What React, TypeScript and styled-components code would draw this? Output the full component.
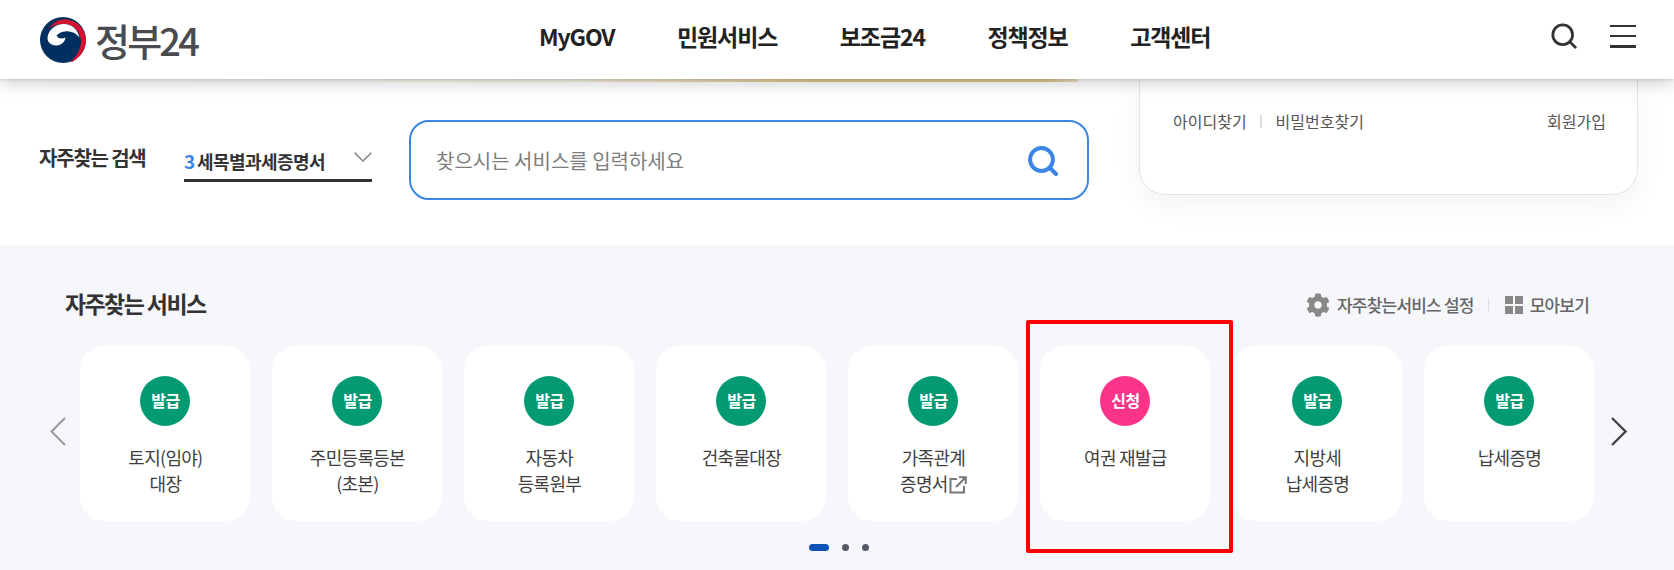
import React from "react";
import styled, { createGlobalStyle } from "styled-components";
import { FaCog } from "react-icons/fa";

const Global = createGlobalStyle`
  html, body { margin: 0; padding: 0; background: #fff; overflow: hidden; }
  body { font-family: "Noto Sans CJK KR", "Noto Sans", sans-serif; color: #333; }
  * { box-sizing: border-box; }
`;

const Page = styled.div`
  width: 1674px;
  height: 570px;
  overflow: hidden;
  display: flex;
  flex-direction: column;
`;

const Header = styled.header`
  position: relative;
  z-index: 5;
  height: 79px;
  flex: none;
  background: #fff;
  display: flex;
  align-items: center;
  padding: 0 38px 0 40px;
  box-shadow: 0 1px 2px rgba(0, 0, 0, 0.1), 0 4px 16px rgba(0, 0, 0, 0.2);
`;

const Logo = styled.a`
  display: flex;
  align-items: center;
  gap: 9px;
  width: 159px;
  flex: none;
`;

const LogoText = styled.span`
  font-size: 38px;
  line-height: 44px;
  font-weight: 500;
  letter-spacing: -2.8px;
  color: #4a4b50;
  white-space: nowrap;
`;

const Nav = styled.nav`
  display: flex;
  gap: 62.5px;
  margin-left: 340px;
  margin-top: -7px;
`;

const NavItem = styled.a`
  font-size: 23px;
  line-height: 30px;
  font-weight: 700;
  color: #222;
  letter-spacing: -1.1px;
  white-space: nowrap;
`;

const HeaderTools = styled.div`
  margin-left: auto;
  display: flex;
  align-items: center;
  gap: 33px;
  margin-top: -7px;
`;

const MenuButton = styled.div`
  width: 26px;
  height: 23px;
  display: flex;
  flex-direction: column;
  justify-content: space-between;
`;

const MenuLine = styled.span`
  display: block;
  height: 2.5px;
  background: #333;
`;

const TopArea = styled.section`
  position: relative;
  height: 166px;
  flex: none;
  display: flex;
  padding: 0 36px 0 39px;
  background: #fff;
`;

const GoldStrip = styled.div`
  position: absolute;
  top: 0;
  left: 40px;
  width: 1038px;
  height: 3px;
  background: linear-gradient(90deg, rgba(224, 200, 138, 0), rgba(224, 205, 150, 0.25) 50%, #e0c88c 75%, #e0c88c 97%, rgba(224, 200, 140, 0.5));
`;

const SearchRow = styled.div`
  display: flex;
  align-items: center;
  height: 80px;
  margin-top: 41px;
`;

const SearchLabel = styled.strong`
  width: 145px;
  font-size: 20px;
  line-height: 26px;
  font-weight: 700;
  letter-spacing: -1.2px;
  color: #333;
  margin-top: -4px;
  white-space: nowrap;
`;

const KeywordSelect = styled.div`
  width: 188px;
  height: 34px;
  margin-top: 10px;
  border-bottom: 3px solid #333;
  display: flex;
  align-items: flex-start;
  white-space: nowrap;
`;

const KeywordRank = styled.span`
  font-size: 19px;
  line-height: 26px;
  font-weight: 700;
  color: #3a85e6;
  width: 13px;
`;

const KeywordName = styled.span`
  font-size: 18px;
  line-height: 26px;
  font-weight: 700;
  letter-spacing: -0.55px;
  color: #333;
  flex: 1;
`;

const KeywordChevron = styled.svg`
  margin-top: 4px;
  flex: none;
`;

const SearchBox = styled.div`
  width: 680px;
  height: 80px;
  margin-left: 37px;
  border: 2px solid #3a85e6;
  border-radius: 20px;
  display: flex;
  align-items: center;
  justify-content: space-between;
  padding: 1px 29px 0 25px;
`;

const Placeholder = styled.span`
  font-size: 20px;
  line-height: 28px;
  color: #7d7d7d;
  white-space: nowrap;
`;

const LoginCard = styled.aside`
  margin-left: auto;
  width: 499px;
  height: 116px;
  background: #fff;
  border: 1px solid #e3e4ee;
  border-top: none;
  border-radius: 0 0 26px 26px;
  box-shadow: 0 10px 30px rgba(0, 0, 0, 0.05);
  padding: 29px 31px 0 33px;
  display: flex;
  align-items: flex-start;
`;

const LoginLink = styled.a<{ $end?: boolean }>`
  font-size: 16px;
  line-height: 26px;
  color: #555;
  white-space: nowrap;
  margin-left: ${(p) => (p.$end ? "auto" : "0")};
`;

const LoginDivider = styled.span`
  width: 2px;
  height: 13px;
  margin: 7px 14px 0 13px;
  background: #ddd;
`;

const ServiceSection = styled.section`
  position: relative;
  flex: 1;
  background: #f6f7fb;
  padding-top: 45px;
`;

const SectionHead = styled.div`
  height: 30px;
  padding: 0 85px 0 65px;
  display: flex;
  align-items: center;
  justify-content: space-between;
`;

const SectionTitle = styled.h2`
  margin: -4px 0 0;
  font-size: 23px;
  line-height: 30px;
  font-weight: 700;
  letter-spacing: -1.6px;
  color: #333;
`;

const HeadActions = styled.div`
  display: flex;
  align-items: center;
  color: #666;
`;

const ActionLink = styled.a`
  display: flex;
  align-items: center;
  gap: 7px;
  font-size: 17px;
  line-height: 26px;
  font-weight: 500;
  letter-spacing: -0.8px;
  color: #666;
  white-space: nowrap;
`;

const ActionDivider = styled.span`
  width: 1px;
  height: 14px;
  background: #dfe0e5;
  margin: 0 16px 0 14px;
`;

const GridIcon = styled.span`
  width: 18px;
  height: 18px;
  display: grid;
  grid-template-columns: 1fr 1fr;
  gap: 2px;
`;

const GridCell = styled.i`
  display: block;
  background: #888;
`;

const Carousel = styled.div`
  margin-top: 26px;
  padding-left: 50px;
  display: flex;
  align-items: center;
`;

const Arrow = styled.button<{ $next?: boolean }>`
  width: 16px;
  height: 29px;
  padding: 0;
  border: 0;
  background: none;
  flex: none;
  margin: ${(p) => (p.$next ? "0 0 5px 17px" : "0 14.4px 5px 0")};
  color: ${(p) => (p.$next ? "#444" : "#999")};
`;

const CardList = styled.ul`
  list-style: none;
  margin: 0;
  padding: 0;
  display: flex;
  gap: 22px;
`;

const Card = styled.li`
  width: 170px;
  height: 175px;
  background: #fff;
  border-radius: 24px;
  padding-top: 30px;
  display: flex;
  flex-direction: column;
  align-items: center;
`;

const Badge = styled.span<{ $kind: "issue" | "apply" }>`
  width: 50px;
  height: 50px;
  padding-bottom: 2px;
  border-radius: 50%;
  background: ${(p) => (p.$kind === "apply" ? "#fb3389" : "#039a72")};
  color: #fff;
  font-size: 16px;
  font-weight: 700;
  letter-spacing: -0.5px;
  display: flex;
  align-items: center;
  justify-content: center;
`;

const CardLabel = styled.p`
  margin: 18px 0 0;
  font-size: 18px;
  line-height: 26px;
  color: #3f3f3f;
  letter-spacing: -0.7px;
  text-align: center;
  white-space: pre-line;
`;

const LinkMark = styled.svg`
  display: inline-block;
  vertical-align: -3px;
  margin-left: 1px;
`;

const Pagination = styled.div`
  margin-top: 23px;
  padding-left: 4px;
  display: flex;
  justify-content: center;
  align-items: center;
  gap: 13px;
`;

const PageDot = styled.span<{ $active?: boolean }>`
  width: ${(p) => (p.$active ? "20px" : "7px")};
  height: 7px;
  border-radius: 4px;
  background: ${(p) => (p.$active ? "#0b53b8" : "#555a6a")};
`;

const Highlight = styled.div`
  position: absolute;
  left: 1026px;
  top: 75px;
  width: 207px;
  height: 233px;
  border: 4px solid #f00;
  border-radius: 2px;
  pointer-events: none;
`;

const menu = ["MyGOV", "민원서비스", "보조금24", "정책정보", "고객센터"];

const services: { kind: "issue" | "apply"; label: string; external?: boolean }[] = [
  { kind: "issue", label: "토지(임야)\n대장" },
  { kind: "issue", label: "주민등록등본\n(초본)" },
  { kind: "issue", label: "자동차\n등록원부" },
  { kind: "issue", label: "건축물대장" },
  { kind: "issue", label: "가족관계\n증명서", external: true },
  { kind: "apply", label: "여권 재발급" },
  { kind: "issue", label: "지방세\n납세증명" },
  { kind: "issue", label: "납세증명" },
];

const EmblemSvg = () => (
  <svg width="46" height="46" viewBox="0 0 46 46" aria-hidden="true">
    <circle cx="23" cy="23" r="23" fill="#00305f" />
    <path
      d="M8.5 12C13 5 20 1.8 27 2.4C37.5 3.5 46 12.5 46 23.5C46 33 39.5 42 30 45.8C36.5 39.5 41 32 41 24C41 14.5 33 7 24 7C17.5 7 12.5 8.5 8.5 12Z"
      fill="#d2122e"
    />
    <path
      d="M7.5 21C8 13 15.5 7 24 7C31.5 7 37.5 12 39.5 20.5C36 16 31.5 14 26.5 14.2C22 14.4 18.5 16 16.5 18.6C18 21.8 22 22.3 25.5 20.6C25 25.2 21 28.8 16 28.5C11 28.2 7.5 25.5 7.5 21Z"
      fill="#fff"
    />
  </svg>
);

const SearchGlyph = ({ size, color, stroke }: { size: number; color: string; stroke: number }) => (
  <svg width={size} height={size} viewBox="0 0 30 30" fill="none" aria-hidden="true">
    <circle cx="13.5" cy="13.5" r="11.4" stroke={color} strokeWidth={stroke} />
    <path d="M21.5 21.5L28 28" stroke={color} strokeWidth={stroke} strokeLinecap="round" />
  </svg>
);

export default function App() {
  return (
    <Page>
      <Global />
      <Header>
        <Logo>
          <EmblemSvg />
          <LogoText>정부24</LogoText>
        </Logo>
        <Nav>
          {menu.map((m) => (
            <NavItem key={m}>{m}</NavItem>
          ))}
        </Nav>
        <HeaderTools>
          <SearchGlyph size={26} color="#333" stroke={3.2} />
          <MenuButton>
            <MenuLine />
            <MenuLine />
            <MenuLine />
          </MenuButton>
        </HeaderTools>
      </Header>

      <TopArea>
        <GoldStrip />
        <SearchRow>
          <SearchLabel>자주찾는 검색</SearchLabel>
          <KeywordSelect>
            <KeywordRank>3</KeywordRank>
            <KeywordName>세목별과세증명서</KeywordName>
            <KeywordChevron width="18" height="10" viewBox="0 0 18 10" fill="none" aria-hidden="true">
              <path d="M0.6 0.6L9 9L17.4 0.6" stroke="#888" strokeWidth="1.5" />
            </KeywordChevron>
          </KeywordSelect>
          <SearchBox>
            <Placeholder>찾으시는 서비스를 입력하세요</Placeholder>
            <SearchGlyph size={30} color="#3a85e6" stroke={4} />
          </SearchBox>
        </SearchRow>
        <LoginCard>
          <LoginLink>아이디찾기</LoginLink>
          <LoginDivider />
          <LoginLink>비밀번호찾기</LoginLink>
          <LoginLink $end>회원가입</LoginLink>
        </LoginCard>
      </TopArea>

      <ServiceSection>
        <SectionHead>
          <SectionTitle>자주찾는 서비스</SectionTitle>
          <HeadActions>
            <ActionLink>
              <FaCog size={24} color="#888" />
              자주찾는서비스 설정
            </ActionLink>
            <ActionDivider />
            <ActionLink>
              <GridIcon>
                <GridCell />
                <GridCell />
                <GridCell />
                <GridCell />
              </GridIcon>
              모아보기
            </ActionLink>
          </HeadActions>
        </SectionHead>

        <Carousel>
          <Arrow aria-label="이전">
            <svg width="16" height="29" viewBox="0 0 16 29" fill="none">
              <path d="M15 1L1.5 14.5L15 28" stroke="currentColor" strokeWidth="2" />
            </svg>
          </Arrow>
          <CardList>
            {services.map((s) => (
              <Card key={s.label}>
                <Badge $kind={s.kind}>{s.kind === "apply" ? "신청" : "발급"}</Badge>
                <CardLabel>
                  {s.label}
                  {s.external && (
                    <LinkMark width="18" height="18" viewBox="0 0 18 18" fill="none" aria-hidden="true">
                      <path d="M8 3H1.5V16.5H15V10" stroke="#777" strokeWidth="2" />
                      <path d="M7 11L16 2M10 1.2H16.8V8" stroke="#777" strokeWidth="2" />
                    </LinkMark>
                  )}
                </CardLabel>
              </Card>
            ))}
          </CardList>
          <Arrow $next aria-label="다음">
            <svg width="16" height="29" viewBox="0 0 16 29" fill="none">
              <path d="M1 1L14.5 14.5L1 28" stroke="currentColor" strokeWidth="2.4" />
            </svg>
          </Arrow>
        </Carousel>

        <Pagination>
          <PageDot $active />
          <PageDot />
          <PageDot />
        </Pagination>
        <Highlight />
      </ServiceSection>
    </Page>
  );
}
